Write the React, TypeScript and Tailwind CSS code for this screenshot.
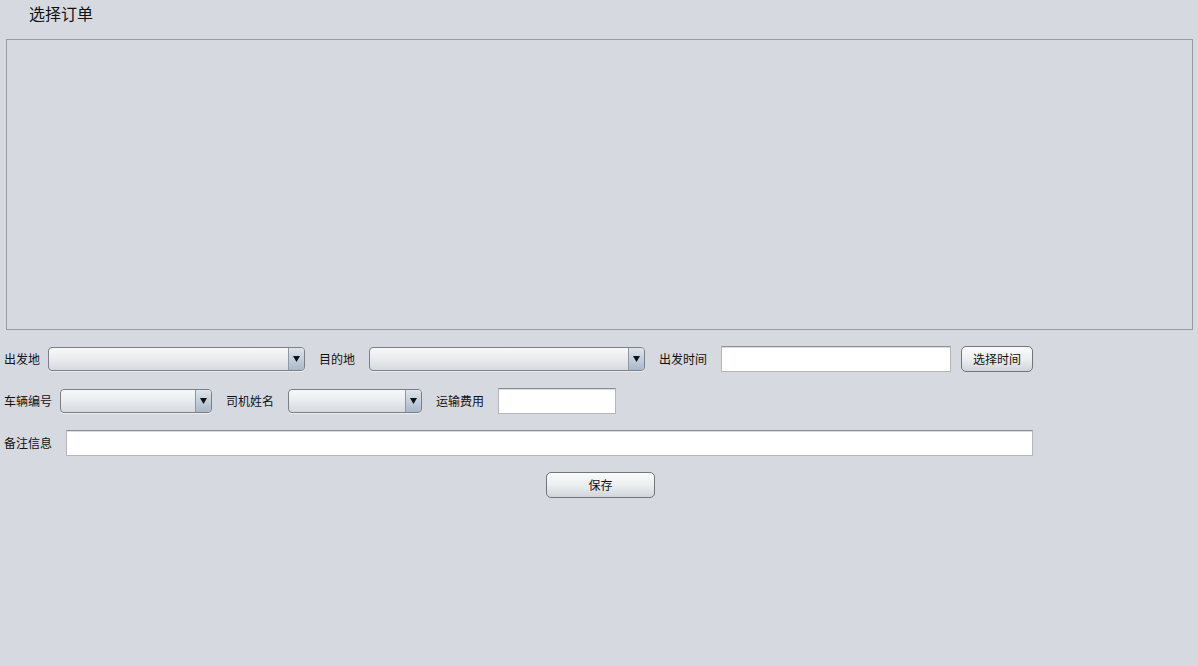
import React from 'react';

const font = { fontFamily: '"Noto Sans CJK SC", "Noto Sans", sans-serif' };

function Combo({ width }: { width: string }) {
  return (
    <div
      className={`${width} h-[24px] flex rounded-[4px] border border-[#7c8086] bg-gradient-to-b from-[#f7f8f9] via-[#e9ebee] to-[#d6d9de] overflow-hidden shadow-[0_1px_0_rgba(255,255,255,0.5)]`}
    >
      <div className="flex-1" />
      <div className="w-[16px] border-l border-[#8a98a8] bg-gradient-to-b from-[#dde4ec] via-[#c3cfdc] to-[#a9b8c8] flex items-center justify-center">
        <svg width="7" height="6" viewBox="0 0 7 6">
          <path d="M0 0 H7 L3.5 6 Z" fill="#111" />
        </svg>
      </div>
    </div>
  );
}

function Field({ width }: { width: string }) {
  return (
    <div
      className={`${width} h-[26px] bg-white border border-[#b4b6b9] border-t-[#8c8e91] shadow-[inset_0_1px_0_#dcdde0]`}
    />
  );
}

function Btn({ width, label }: { width: string; label: string }) {
  return (
    <button
      className={`${width} h-[26px] rounded-[5px] border border-[#70757b] bg-gradient-to-b from-[#fbfbfc] via-[#eceef0] to-[#d2d5da] text-[12px] text-[#111] leading-none flex items-center justify-center`}
      style={font}
    >
      {label}
    </button>
  );
}

function Label({ text, className = '' }: { text: string; className?: string }) {
  return (
    <span className={`text-[12px] text-[#111] leading-none whitespace-nowrap ${className}`}>{text}</span>
  );
}

export default function App() {
  return (
    <div className="w-[1198px] h-[666px] bg-[#d6d9df] overflow-hidden" style={font}>
      <div className="h-[39px] pl-[29px] pt-[3px] text-[16px] leading-[20px] text-[#111]">选择订单</div>
      <div className="ml-[6px] w-[1187px] h-[291px] border border-[#999ca3]" />

      <div className="mt-[16px] flex flex-col gap-[16px]">
        <div className="h-[26px] flex items-center pl-[4px]">
          <Label text="出发地" className="w-[44px]" />
          <Combo width="w-[257px]" />
          <Label text="目的地" className="ml-[14px] w-[50px]" />
          <Combo width="w-[276px]" />
          <Label text="出发时间" className="ml-[14px] w-[62px]" />
          <Field width="w-[230px]" />
          <div className="ml-[10px]">
            <Btn width="w-[72px]" label="选择时间" />
          </div>
        </div>

        <div className="h-[26px] flex items-center pl-[4px]">
          <Label text="车辆编号" className="w-[56px]" />
          <Combo width="w-[152px]" />
          <Label text="司机姓名" className="ml-[14px] w-[62px]" />
          <Combo width="w-[134px]" />
          <Label text="运输费用" className="ml-[14px] w-[62px]" />
          <Field width="w-[118px]" />
        </div>

        <div className="h-[26px] flex items-center pl-[4px]">
          <Label text="备注信息" className="w-[62px]" />
          <Field width="w-[967px]" />
        </div>

        <div className="h-[26px] pl-[546px]">
          <Btn width="w-[109px]" label="保存" />
        </div>
      </div>
    </div>
  );
}
